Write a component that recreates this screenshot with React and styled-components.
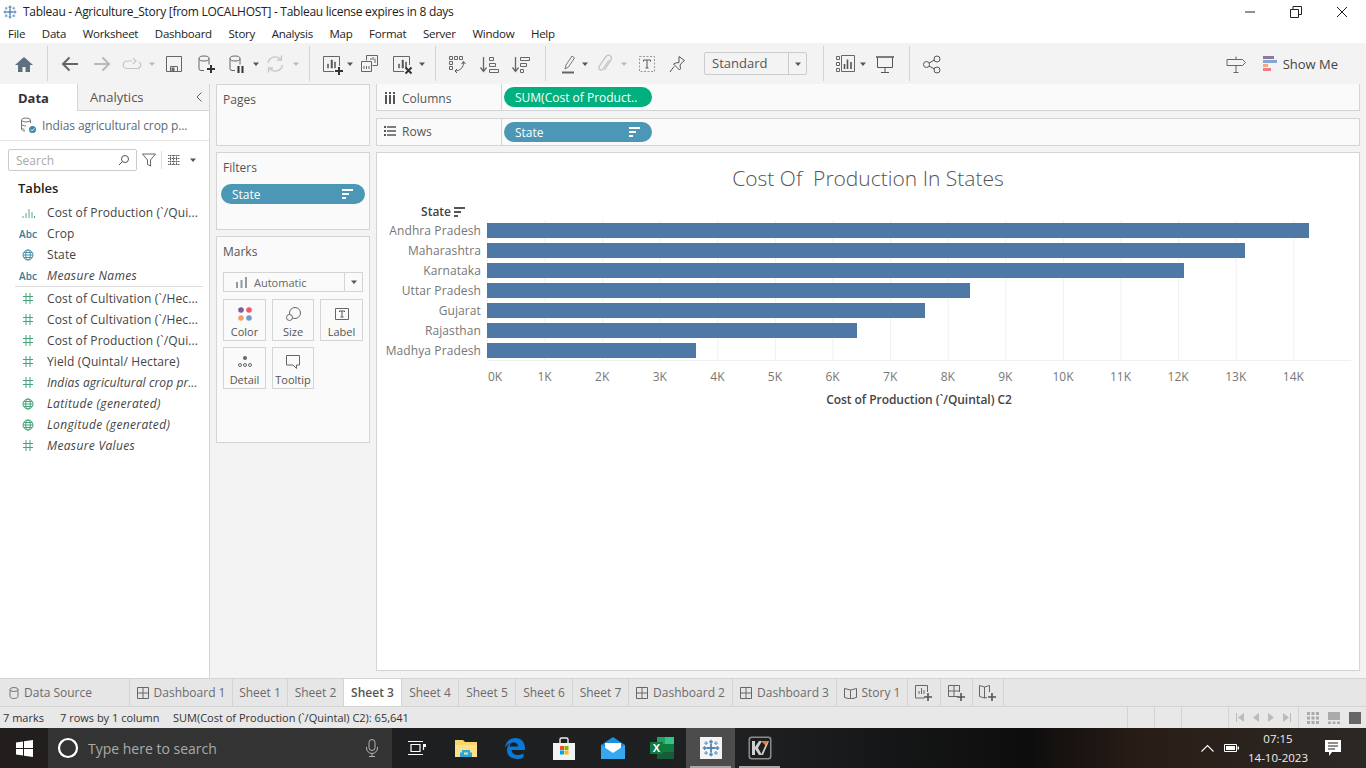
import React from 'react';
import styled, { createGlobalStyle } from 'styled-components';

const GlobalStyle = createGlobalStyle`
    html, body {
        margin: 0;
        padding: 0;
        background: #fff;
    }
    body {
        font-family: "Open Sans", "Liberation Sans", sans-serif;
        font-size: 12px;
        color: #333;
    }
    * {
        box-sizing: border-box;
    }
`;

const Icon = ({ children, w = 24, h = 24 }) => (
    <svg width={w} height={h} viewBox={`0 0 ${w} ${h}`} fill="none" style={{ display: 'block' }}>
        {children}
    </svg>
);

const TableauLogo = ({ size = 14 }) => (
    <svg width={size} height={size} viewBox="0 0 24 24" fill="none" style={{ display: 'block' }}>
        <g stroke="#4f86b5" strokeWidth="2">
            <path d="M12 6v12M6 12h12" strokeWidth="2.4" />
            <path d="M12 1v5M9.5 3.5h5M12 18v5M9.5 20.5h5M1 12h5M3.5 9.5v5M18 12h5M20.5 9.5v5" />
            <path d="M5.5 3v5M3 5.5h5M18.5 3v5M16 5.5h5M5.5 16v5M3 18.5h5M18.5 16v5M16 18.5h5" stroke="#7fa9cc" />
        </g>
    </svg>
);

const Caret = ({ light }) => (
    <Icon w={8} h={24}>
        <path d="M1 10.5h6L4 14z" fill={light ? '#bbb' : '#555'} />
    </Icon>
);

const Home = () => (
    <Icon>
        <path d="M12 5L3 13h3v7h4.5v-5h3v5H18v-7h3z" fill="#5f6f82" />
    </Icon>
);

const ArrowBack = () => (
    <Icon>
        <path d="M20 12H5M11.5 5.5L5 12l6.5 6.5" stroke="#666" strokeWidth="2" />
    </Icon>
);

const ArrowForward = () => (
    <Icon>
        <path d="M4 12h15M12.5 5.5L19 12l-6.5 6.5" stroke="#b8b8b8" strokeWidth="2" />
    </Icon>
);

const Redo = () => (
    <Icon>
        <path d="M12 9H7a3.5 3.5 0 0 0 0 7.5h10a3.5 3.5 0 0 0 2-6.5" stroke="#c6c6c6" strokeWidth="1.2" />
        <path d="M13 6l3 3-3 3" stroke="#c6c6c6" strokeWidth="1.2" />
    </Icon>
);

const Save = () => (
    <Icon>
        <path d="M4.5 4.5h15v15h-15z" stroke="#666" />
        <path d="M8.5 19.5v-5h7v5" stroke="#666" />
        <path d="M9.5 15.5h3v4h-3z" fill="#666" />
    </Icon>
);

const Cylinder = () => (
    <>
        <ellipse cx="11" cy="6.5" rx="5" ry="2.5" stroke="#666" />
        <path d="M6 6.5v10a2 2 0 0 0 2 2h3M16 6.5v6" stroke="#666" />
    </>
);

const DataAdd = () => (
    <Icon>
        <Cylinder />
        <path d="M18 13v8M14 17h8" stroke="#333" strokeWidth="2" />
    </Icon>
);

const DataPause = () => (
    <Icon>
        <Cylinder />
        <path d="M14.5 14v7M18.5 14v7" stroke="#333" strokeWidth="2" />
    </Icon>
);

const Refresh = () => (
    <Icon>
        <path d="M5 11a7.5 7.5 0 0 1 13-3.5M19.5 13A7.5 7.5 0 0 1 6.5 16.5" stroke="#c6c6c6" strokeWidth="1.3" />
        <path d="M18.5 3.5V8H14M5.5 20.5V16H10" stroke="#c6c6c6" strokeWidth="1.3" />
    </Icon>
);

const SheetBars = () => (
    <path d="M8.5 16v-4h1v4zM12 16V8h1.5v8zM15.5 16v-6h1v6z" fill="#555" stroke="#555" strokeWidth="0.5" />
);

const NewSheet = () => (
    <Icon>
        <path d="M20.5 14V4.5h-16v15H15" stroke="#666" />
        <SheetBars />
        <path d="M20 15v8M16 19h8" stroke="#333" strokeWidth="2" />
    </Icon>
);

const Duplicate = () => (
    <Icon>
        <path d="M7.5 8.5v-5h11v10h-5" stroke="#666" />
        <path d="M2.5 9.5h10v10h-10z" stroke="#666" fill="#f3f3f3" />
        <path d="M12 8V6M14 8V5M16 11V6.5M5 17v-3M7.5 17v-3M10 17v-3" stroke="#666" />
    </Icon>
);

const ClearSheet = () => (
    <Icon>
        <path d="M19.5 13V4.5h-16v15H14" stroke="#666" />
        <SheetBars />
        <path d="M15.5 15.5l6 6M21.5 15.5l-6 6" stroke="#333" strokeWidth="2" />
    </Icon>
);

const SwapAxes = () => (
    <Icon>
        <path d="M4.5 4.5h3v3h-3zM9.5 4.5h3v3h-3zM14.5 4.5h3v3h-3zM4.5 9.5h3v3h-3zM4.5 14.5h3v3h-3z" stroke="#666" />
        <path d="M18.5 10a8 8 0 0 1-8 9" stroke="#666" />
        <path d="M16.5 12l2-2.5 2 2.5M12 17l-2 2 2 2" stroke="#555" />
    </Icon>
);

const SortUp = () => (
    <Icon>
        <path d="M6.5 5v14M3.5 15.5l3 4 3-4" stroke="#666" strokeWidth="1.3" />
        <path d="M12.5 5.5h4v3h-4zM12.5 11.5h6v3h-6zM12.5 17.5h9v3h-9z" stroke="#666" />
    </Icon>
);

const SortDown = () => (
    <Icon>
        <path d="M6.5 5v14M3.5 15.5l3 4 3-4" stroke="#666" strokeWidth="1.3" />
        <path d="M11.5 5.5h9v3h-9zM11.5 11.5h6v3h-6zM11.5 17.5h3v3h-3z" stroke="#666" />
    </Icon>
);

const Highlight = () => (
    <Icon>
        <path d="M6 20.5h12" stroke="#666" strokeWidth="2" />
        <path d="M9 17l1-4 6-9 2.5 2-6 9z" stroke="#777" />
    </Icon>
);

const PaperClip = () => (
    <Icon>
        <path d="M16 8l-6 9a2.3 2.3 0 0 1-3.8-2.6L13 4.5a3 3 0 0 1 5 3.3l-6.5 10" stroke="#c4c4c4" strokeWidth="1.3" />
    </Icon>
);

const TextBox = () => (
    <Icon>
        <path d="M4.5 4.5h15v15h-15z" stroke="#999" strokeDasharray="2 1.5" />
        <path d="M8.5 9.5V8h7v1.5M12 8v8M10.5 16h3" stroke="#555" />
    </Icon>
);

const Pin = () => (
    <Icon>
        <path d="M14 4.5l5.5 4-1.5 1-3 3.5.5 3.5-1 1.5-6-6 2-1 3.5-.5z" stroke="#555" />
        <path d="M9 14.5L5 20" stroke="#555" />
    </Icon>
);

const ShowMeMini = () => (
    <Icon>
        <path d="M3.5 4.5h3v3h-3zM3.5 10.5h3v3h-3zM3.5 16.5h3v3h-3zM8.5 3.5h13v16h-13z" stroke="#666" />
        <path d="M11.5 17v-5M14.5 17V7.5M18 17v-7" stroke="#555" strokeWidth="1.6" />
    </Icon>
);

const Present = () => (
    <Icon>
        <path d="M3 5h18" stroke="#555" strokeWidth="1.5" />
        <path d="M4.5 5.5v10h15v-10M12 15.5v5M8 20.5h8" stroke="#555" />
    </Icon>
);

const Share = () => (
    <Icon>
        <circle cx="6.5" cy="12.5" r="3" stroke="#555" />
        <circle cx="17" cy="7" r="3" stroke="#555" />
        <circle cx="17" cy="18" r="3" stroke="#555" />
        <path d="M9 11l5.5-3M9 14l5.5 3" stroke="#555" />
    </Icon>
);

const Signpost = () => (
    <Icon>
        <path d="M3 7.5h15.5l3 3-3 3H3zM12 4.5v3M12 13.5v7M9.5 20.5h5" stroke="#666" />
    </Icon>
);

const ShowMeBars = () => (
    <Icon w={15} h={16}>
        <path d="M0 0h11v3H0z" fill="#8d79a3" />
        <path d="M0 4h14v3H0z" fill="#82a8d0" />
        <path d="M0 8h5v3H0z" fill="#f3a97a" />
        <path d="M0 12h8v3H0z" fill="#f27c85" />
    </Icon>
);

const PillSort = ({ color = '#fff' }) => (
    <Icon w={11} h={10}>
        <path d="M0 0h11v2H0zM0 4h7v2H0zM0 8h4v2H0z" fill={color} />
    </Icon>
);

const Globe = ({ color }) => (
    <Icon w={12} h={12}>
        <circle cx="6" cy="6" r="5" stroke={color} />
        <ellipse cx="6" cy="6" rx="2.3" ry="5" stroke={color} />
        <path d="M1 6h10M1.8 3.5h8.4M1.8 8.5h8.4" stroke={color} />
    </Icon>
);

const Hash = () => (
    <Icon w={10} h={11}>
        <path d="M3 0v11M7 0v11M0 3.5h10M0 7.5h10" stroke="#46a37c" />
    </Icon>
);

const MeasureBars = () => (
    <Icon w={13} h={10}>
        <path d="M1 8v2M4 5v5M7 1v9M10 4v6M12.5 8v2" stroke="#58a884" />
    </Icon>
);

const WindowsLogo = () => (
    <Icon w={17} h={17}>
        <path d="M0 2.5L7 1.5V8H0zM8 1.3L17 0v8H8zM0 9h7v6.5l-7-1zM8 9h9v8l-9-1.3z" fill="#fff" />
    </Icon>
);

const Mic = () => (
    <Icon w={14} h={18}>
        <rect x="4" y="0.5" width="6" height="11" rx="3" stroke="#b5b5b5" />
        <path d="M1.5 8v1a5.5 5.5 0 0 0 11 0V8M7 14.5v3M4 17.5h6" stroke="#b5b5b5" />
    </Icon>
);

const TaskView = () => (
    <Icon w={18} h={16}>
        <path d="M3 4.5h9v7H3zM0 1.5h15M0 14.5h15" stroke="#fff" strokeWidth="1.2" />
        <path d="M15.5 5v5" stroke="#fff" strokeWidth="1.2" />
        <path d="M15 4h3v3h-3z" fill="#fff" />
    </Icon>
);

const FolderIcon = () => (
    <Icon w={22} h={18}>
        <path d="M0 1h8l2 2h12v15H0z" fill="#f8d568" />
        <path d="M0 6h22v12H0z" fill="#fde08a" />
        <path d="M7 11h8v2.5h2V18H5v-4.5h2z" fill="#2aa6e0" />
        <path d="M9 13.5h4v2H9z" fill="#fde08a" />
    </Icon>
);

const EdgeLogo = () => (
    <svg width="22" height="22" viewBox="0 0 22 22" style={{ display: 'block' }}>
        <path
            d="M1 10.5C2 4 6.5 1 11.5 1c6 0 9.5 4.5 9.5 10.5V13H7.5c.3 3.500 3 5 6 5 2.500 0 4.500-.7 6-1.800v4.300c-1.800 1-4 1.500-6.500 1.500-6 0-10-3.500-10-9 0-3.500 2-6.500 5-8-1.500 1.500-2.300 3-2.500 4.500h8.500c0-2.500-1.500-4-4.500-4-3.500 0-6.500 2-8.500 5z"
            fill="#0a78d7"
        />
    </svg>
);

const StoreLogo = () => (
    <Icon w={24} h={24}>
        <path d="M8 7V3.5A1.5 1.5 0 0 1 9.5 2h5A1.5 1.5 0 0 1 16 3.5V7" stroke="#eee" strokeWidth="1.4" />
        <path d="M1 7h22v17H1z" fill="#f2f2f2" />
        <path d="M8 10h4v4H8z" fill="#f25022" />
        <path d="M12.5 10h4v4h-4z" fill="#7fba00" />
        <path d="M8 14.5h4v4H8z" fill="#00a4ef" />
        <path d="M12.5 14.5h4v4h-4z" fill="#ffb900" />
    </Icon>
);

const MailLogo = () => (
    <Icon w={24} h={22}>
        <path d="M0 8L12 0l12 8v14H0z" fill="#1d8fe3" />
        <path d="M4 6h16v6l-8 5-8-5z" fill="#fff" />
        <path d="M0 8l12 8 12-8v14H0z" fill="#35a8f0" />
    </Icon>
);

const ExcelLogo = () => (
    <svg width="24" height="24" viewBox="0 0 24 24" style={{ display: 'block' }}>
        <path d="M7 1h17v7H7z" fill="#21a366" />
        <path d="M7 8h17v8H7z" fill="#107c41" />
        <path d="M15 1h9v7h-9z" fill="#33c481" />
        <path d="M7 16h17v7H7z" fill="#185c37" />
        <path d="M0 6h13v12H0z" fill="#0f7b3f" />
        <text x="6.5" y="16" fontFamily="Liberation Sans, sans-serif" fontSize="11" fontWeight="700" fill="#fff" textAnchor="middle">X</text>
    </svg>
);

const K7Logo = () => (
    <Icon w={24} h={24}>
        <rect x="0.5" y="0.5" width="23" height="23" rx="3" fill="#8b8b8b" />
        <rect x="2" y="2" width="20" height="20" rx="2" fill="#1f1f1f" />
        <path d="M4 5h3v6l4-6h3l-4 7 4 7h-3l-4-6v6H4z" fill="#cfcfcf" />
        <path d="M13 5h8l-3 5z" fill="#ef7a2d" />
        <path d="M21 5l-6 14h-2l4.5-10z" fill="#cfcfcf" />
    </Icon>
);

const SearchRing = () => (
    <Icon w={22} h={22}>
        <circle cx="11" cy="11" r="9" stroke="#fff" strokeWidth="2.2" />
    </Icon>
);

const TrayChevron = () => (
    <Icon w={13} h={8}>
        <path d="M.5 7.5l6-6 6 6" stroke="#fff" strokeWidth="1.1" />
    </Icon>
);

const TrayBattery = () => (
    <Icon w={15} h={10}>
        <path d="M.5 1.5h12v7H.5z" stroke="#fff" />
        <path d="M2 3h9v4H2z" fill="#fff" />
        <path d="M13.5 3.5H15v3h-1.5z" fill="#fff" />
    </Icon>
);

const TrayNotes = () => (
    <Icon w={17} h={17}>
        <path d="M0 0h16v12H7l-3 4v-4H0z" fill="#fff" />
        <path d="M3 3h10M3 6h10M3 9h7" stroke="#222" />
    </Icon>
);

const DashIcon = () => (
    <Icon w={12} h={12}>
        <path d="M.5.5h11v11H.5zM6 .5v11M.5 6h11" stroke="#666" />
    </Icon>
);

const StoryIcon = () => (
    <Icon w={13} h={12}>
        <path d="M.5 1.5l6 1.5 6-1.5v9l-6 1.5-6-1.5zM6.5 3v9" stroke="#666" />
    </Icon>
);

const AddSheet = ({ children }) => (
    <Icon w={18} h={18}>
        {children}
        <path d="M13 9v8M9 13h8" stroke="#555" strokeWidth="1.6" />
    </Icon>
);

const fields = [
    { name: 'Cost of Production (`/Qui...', kind: 'bars' },
    { name: 'Crop', kind: 'abc' },
    { name: 'State', kind: 'globeBlue' },
    { name: 'Measure Names', kind: 'abc', italic: true },
];

const measures = [
    { name: 'Cost of Cultivation (`/Hec...', kind: 'hash' },
    { name: 'Cost of Cultivation (`/Hec...', kind: 'hash' },
    { name: 'Cost of Production (`/Qui...', kind: 'hash' },
    { name: 'Yield (Quintal/ Hectare)', kind: 'hash' },
    { name: 'Indias agricultural crop pr...', kind: 'hash', italic: true, tight: true },
    { name: 'Latitude (generated)', kind: 'globeGreen', italic: true },
    { name: 'Longitude (generated)', kind: 'globeGreen', italic: true },
    { name: 'Measure Values', kind: 'hash', italic: true },
];

const states = [
    { name: 'Andhra Pradesh', width: 822 },
    { name: 'Maharashtra', width: 758 },
    { name: 'Karnataka', width: 697 },
    { name: 'Uttar Pradesh', width: 483 },
    { name: 'Gujarat', width: 438 },
    { name: 'Rajasthan', width: 370 },
    { name: 'Madhya Pradesh', width: 209 },
];

const tabs = [
    { label: 'Dashboard 1', width: 103, kind: 'dash' },
    { label: 'Sheet 1', width: 55 },
    { label: 'Sheet 2', width: 56 },
    { label: 'Sheet 3', width: 58, active: true },
    { label: 'Sheet 4', width: 57 },
    { label: 'Sheet 5', width: 57 },
    { label: 'Sheet 6', width: 57 },
    { label: 'Sheet 7', width: 56 },
    { label: 'Dashboard 2', width: 104, kind: 'dash' },
    { label: 'Dashboard 3', width: 104, kind: 'dash' },
    { label: 'Story 1', width: 71, kind: 'story' },
];

const menu = ['File', 'Data', 'Worksheet', 'Dashboard', 'Story', 'Analysis', 'Map', 'Format', 'Server', 'Window', 'Help'];

const Field = ({ field }) => (
    <FieldRow>
        <FieldIcon>
            {field.kind === 'bars' && <MeasureBars />}
            {field.kind === 'abc' && <Abc>Abc</Abc>}
            {field.kind === 'hash' && <Hash />}
            {field.kind === 'globeBlue' && <Globe color="#4b8fa8" />}
            {field.kind === 'globeGreen' && <Globe color="#46a37c" />}
        </FieldIcon>
        <FieldName $italic={field.italic} $tight={field.tight}>{field.name}</FieldName>
    </FieldRow>
);

const App = () => {
    return (
        <>
            <GlobalStyle />
            <Screen>
                <TitleBar>
                    <TableauLogo />
                    <TitleText>Tableau - Agriculture_Story [from LOCALHOST] - Tableau license expires in 8 days</TitleText>
                    <WindowControls>
                        <Icon w={12} h={12}><path d="M1 6h10" stroke="#222" /></Icon>
                        <Icon w={12} h={12}><path d="M.5 3.5h8v8h-8zM3 3.5V.5h8.5v8H8.5" stroke="#222" /></Icon>
                        <Icon w={12} h={12}><path d="M1 1l10 10M11 1L1 11" stroke="#222" /></Icon>
                    </WindowControls>
                </TitleBar>
                <MenuBar>
                    {menu.map((item) => (
                        <MenuItem key={item}>{item}</MenuItem>
                    ))}
                </MenuBar>
                <Toolbar>
                    <Tool $ml={12}><Home /></Tool>
                    <ToolSep $ml={11} />
                    <Tool $ml={10}><ArrowBack /></Tool>
                    <Tool $ml={8}><ArrowForward /></Tool>
                    <Tool $ml={6}><Redo /></Tool>
                    <Tool $ml={4} $w={8}><Caret light /></Tool>
                    <Tool $ml={6}><Save /></Tool>
                    <Tool $ml={7}><DataAdd /></Tool>
                    <Tool $ml={7}><DataPause /></Tool>
                    <Tool $ml={4} $w={8}><Caret /></Tool>
                    <Tool $ml={3}><Refresh /></Tool>
                    <Tool $ml={5} $w={8}><Caret light /></Tool>
                    <ToolSep $ml={9} />
                    <Tool $ml={9}><NewSheet /></Tool>
                    <Tool $ml={3} $w={8}><Caret /></Tool>
                    <Tool $ml={5}><Duplicate /></Tool>
                    <Tool $ml={7}><ClearSheet /></Tool>
                    <Tool $ml={4} $w={8}><Caret /></Tool>
                    <ToolSep $ml={9} />
                    <Tool $ml={9}><SwapAxes /></Tool>
                    <Tool $ml={8}><SortUp /></Tool>
                    <Tool $ml={8}><SortDown /></Tool>
                    <ToolSep $ml={12} />
                    <Tool $ml={10}><Highlight /></Tool>
                    <Tool $ml={1} $w={8}><Caret /></Tool>
                    <Tool $ml={4}><PaperClip /></Tool>
                    <Tool $ml={3} $w={8}><Caret light /></Tool>
                    <Tool $ml={7}><TextBox /></Tool>
                    <Tool $ml={6}><Pin /></Tool>
                    <FitSelect>
                        <FitLabel>Standard</FitLabel>
                        <FitArrow><Caret /></FitArrow>
                    </FitSelect>
                    <ToolSep $ml={16} />
                    <Tool $ml={9}><ShowMeMini /></Tool>
                    <Tool $ml={2} $w={8}><Caret /></Tool>
                    <Tool $ml={6}><Present /></Tool>
                    <ToolSep $ml={12} />
                    <Tool $ml={10}><Share /></Tool>
                    <ToolSpacer />
                    <Tool><Signpost /></Tool>
                    <Tool $ml={15} $w={15}><ShowMeBars /></Tool>
                    <ShowMeText>Show Me</ShowMeText>
                </Toolbar>
                <Workspace>
                    <DataPane>
                        <PaneTabs>
                            <PaneTab $active>Data</PaneTab>
                            <PaneTab>
                                Analytics
                                <Icon w={8} h={12}><path d="M6.5 1.5L2 6l4.5 4.5" stroke="#666" /></Icon>
                            </PaneTab>
                        </PaneTabs>
                        <SourceRow>
                            <Icon w={17} h={17}>
                                <ellipse cx="6" cy="3" rx="4.5" ry="2" stroke="#777" />
                                <path d="M1.5 3v9c0 1 1.5 2 3.5 2M10.5 3v3M1.5 7c0 1 2 2 4.5 2M1.5 10.5c0 1 1.5 1.5 3 1.8" stroke="#777" />
                                <circle cx="12.5" cy="12.5" r="3.5" fill="#3d88ad" />
                                <path d="M10.8 12.5l1.3 1.3 2.2-2.3" stroke="#fff" />
                            </Icon>
                            <SourceName>Indias agricultural crop p...</SourceName>
                        </SourceRow>
                        <SearchRow>
                            <SearchBox>
                                <SearchHint>Search</SearchHint>
                                <Icon w={12} h={12}><circle cx="7" cy="5" r="3.5" stroke="#555" /><path d="M4.5 7.5L1 11" stroke="#555" /></Icon>
                            </SearchBox>
                            <FilterButton>
                                <Icon w={14} h={14}><path d="M.5 1h13l-5 6v6l-3-1.5V7z" stroke="#666" /></Icon>
                            </FilterButton>
                            <SearchDivider />
                            <Icon w={12} h={10}><path d="M0 .5h12M0 3.5h12M0 6.5h12M0 9.5h12M2.5 0v10M5.5 0v10M8.5 0v10" stroke="#666" strokeDasharray="1.5 .5" /></Icon>
                            <ListCaret><Caret /></ListCaret>
                        </SearchRow>
                        <TablesTitle>Tables</TablesTitle>
                        <FieldGroup>
                            {fields.map((field) => (
                                <Field key={field.name} field={field} />
                            ))}
                        </FieldGroup>
                        <FieldDivider />
                        <FieldGroup>
                            {measures.map((field, index) => (
                                <Field key={index} field={field} />
                            ))}
                        </FieldGroup>
                    </DataPane>
                    <CardsColumn>
                        <Card $h={62}>
                            <CardTitle>Pages</CardTitle>
                        </Card>
                        <Card $h={78} $mt={6}>
                            <CardTitle>Filters</CardTitle>
                            <FilterPill>
                                State
                                <PillSort />
                            </FilterPill>
                        </Card>
                        <Card $h={207} $mt={6}>
                            <CardTitle>Marks</CardTitle>
                            <MarkSelect>
                                <Icon w={13} h={11}><path d="M1 5v6M5.5 3v8M10 0v11" stroke="#999" strokeWidth="2" /></Icon>
                                <MarkSelectLabel>Automatic</MarkSelectLabel>
                                <MarkSelectArrow><Caret /></MarkSelectArrow>
                            </MarkSelect>
                            <MarkGrid>
                                <MarkButton>
                                    <Icon w={14} h={14}>
                                        <circle cx="3" cy="3" r="2.8" fill="#7b5f9a" />
                                        <circle cx="11" cy="3" r="2.8" fill="#ef5b6c" />
                                        <circle cx="3" cy="11" r="2.8" fill="#f0a06c" />
                                        <circle cx="11" cy="11" r="2.8" fill="#6f9ccc" />
                                    </Icon>
                                    Color
                                </MarkButton>
                                <MarkButton>
                                    <Icon w={15} h={14}>
                                        <circle cx="9" cy="6" r="5.5" stroke="#666" fill="#fafafa" />
                                        <circle cx="3.5" cy="10.5" r="3" stroke="#666" fill="#fafafa" />
                                    </Icon>
                                    Size
                                </MarkButton>
                                <MarkButton>
                                    <Icon w={14} h={14}>
                                        <path d="M.5 1.5h13v11H.5z" stroke="#666" />
                                        <path d="M4.5 5V4h5v1M7 4v6M5.5 10h3" stroke="#555" />
                                    </Icon>
                                    Label
                                </MarkButton>
                                <MarkButton>
                                    <Icon w={14} h={14}>
                                        <circle cx="7" cy="3" r="2" fill="#666" />
                                        <circle cx="2" cy="10" r="1.5" stroke="#666" />
                                        <circle cx="7" cy="10" r="1.5" stroke="#666" />
                                        <circle cx="12" cy="10" r="1.5" stroke="#666" />
                                    </Icon>
                                    Detail
                                </MarkButton>
                                <MarkButton>
                                    <Icon w={14} h={14}>
                                        <path d="M.5 .5h13V10h-3v3.5L7 10H.5z" stroke="#666" />
                                    </Icon>
                                    Tooltip
                                </MarkButton>
                            </MarkGrid>
                        </Card>
                    </CardsColumn>
                    <ViewColumn>
                        <Shelf>
                            <ShelfLabel $top={2}>
                                <Icon w={12} h={12}><path d="M2 3v9M6 3v9M10 3v9" stroke="#555" strokeWidth="2" /><path d="M1 0h2v2H1zM5 0h2v2H5zM9 0h2v2H9z" fill="#555" /></Icon>
                                Columns
                            </ShelfLabel>
                            <Pill $color="#00b17f">SUM(Cost of Product..</Pill>
                        </Shelf>
                        <Shelf $mt={7}>
                            <ShelfLabel $bottom={2}>
                                <Icon w={12} h={12}><path d="M3 2h9M3 6h9M3 10h9" stroke="#555" strokeWidth="1.5" /><path d="M0 1h2v2H0zM0 5h2v2H0zM0 9h2v2H0z" fill="#555" /></Icon>
                                Rows
                            </ShelfLabel>
                            <Pill $color="#4b97b5">
                                State
                                <PillSort />
                            </Pill>
                        </Shelf>
                        <ChartCard>
                            <ChartTitle>Cost Of&nbsp; Production In States</ChartTitle>
                            <ChartHeader>
                                <StateHeader>
                                    State
                                    <PillSort color="#555" />
                                </StateHeader>
                            </ChartHeader>
                            <ChartBody>
                                <LabelColumn>
                                    {states.map((state) => (
                                        <StateLabel key={state.name}>{state.name}</StateLabel>
                                    ))}
                                </LabelColumn>
                                <Plot>
                                    {states.map((state) => (
                                        <BarRow key={state.name}>
                                            <Bar style={{ width: state.width }} />
                                        </BarRow>
                                    ))}
                                </Plot>
                            </ChartBody>
                            <Axis>
                                <AxisTick $first>0K</AxisTick>
                                {[1, 2, 3, 4, 5, 6, 7, 8, 9, 10, 11, 12, 13, 14].map((k) => (
                                    <AxisTick key={k}>{k}K</AxisTick>
                                ))}
                            </Axis>
                            <AxisTitle>Cost of Production (`/Quintal) C2</AxisTitle>
                        </ChartCard>
                    </ViewColumn>
                </Workspace>
                <TabBar>
                    <Tab $w={130} $source>
                        <Icon w={10} h={12}><ellipse cx="5" cy="2.5" rx="4" ry="2" stroke="#777" /><path d="M1 2.5v7c0 1 1.5 2 4 2s4-1 4-2v-7" stroke="#777" /></Icon>
                        Data Source
                    </Tab>
                    {tabs.map((tab) => (
                        <Tab key={tab.label} $w={tab.width} $active={tab.active}>
                            {tab.kind === 'dash' && <DashIcon />}
                            {tab.kind === 'story' && <StoryIcon />}
                            {tab.label}
                        </Tab>
                    ))}
                    <Tab $w={33}>
                        <AddSheet><path d="M9.5 14H.5V1.5h12V8" stroke="#666" /><path d="M4 10V7M6.5 10V4M9 10V6" stroke="#666" /></AddSheet>
                    </Tab>
                    <Tab $w={32}>
                        <AddSheet><path d="M9.5 12.5H.5v-11h11V8M6 1.5v11M.5 7h11" stroke="#666" /></AddSheet>
                    </Tab>
                    <Tab $w={31}>
                        <AddSheet><path d="M8 13.5l-2.5.5-5-1.5V1.5l5 1.5 5-1.500V8M5.5 3v11" stroke="#666" /></AddSheet>
                    </Tab>
                </TabBar>
                <StatusBar>
                    <StatusText $w={57}>7 marks</StatusText>
                    <StatusText $w={113}>7 rows by 1 column</StatusText>
                    <StatusText>SUM(Cost of Production (`/Quintal) C2): 65,641</StatusText>
                    <StatusSpacer />
                    <StatusCell $w={27} />
                    <StatusCell $w={27} />
                    <StatusCell $w={47} />
                    <StatusCell $w={70}>
                        <Icon w={8} h={9}><path d="M0 0h1v9H0zM8 0v9L2 4.5z" fill="#bbb" /></Icon>
                        <Icon w={6} h={9}><path d="M6 0v9L0 4.5z" fill="#bbb" /></Icon>
                        <Icon w={6} h={9}><path d="M0 0v9l6-4.5z" fill="#bbb" /></Icon>
                        <Icon w={8} h={9}><path d="M7 0h1v9H7zM0 0v9l6-4.5z" fill="#bbb" /></Icon>
                    </StatusCell>
                    <ViewModes>
                        <Icon w={12} h={12}><path d="M0 0h3v3H0zM4.5 0h3v3h-3zM9 0h3v3H9zM0 4.5h3v3H0zM4.5 4.5h3v3h-3zM9 4.5h3v3H9zM0 9h3v3H0zM4.5 9h3v3h-3zM9 9h3v3H9z" fill="#aaa" /></Icon>
                        <Icon w={12} h={12}><path d="M0 0h12v8H0zM0 9.5h3V12H0zM4.5 9.5h3V12h-3zM9 9.5h3V12H9z" fill="#aaa" /></Icon>
                        <Icon w={12} h={12}><path d="M0 0h12v12H0z" fill="#666" /></Icon>
                    </ViewModes>
                </StatusBar>
                <Taskbar>
                    <StartButton><WindowsLogo /></StartButton>
                    <SearchField>
                        <SearchRing />
                        <SearchPrompt>Type here to search</SearchPrompt>
                        <Mic />
                    </SearchField>
                    <TaskItem><TaskView /></TaskItem>
                    <TaskItem><FolderIcon /></TaskItem>
                    <TaskItem><EdgeLogo /></TaskItem>
                    <TaskItem><StoreLogo /></TaskItem>
                    <TaskItem><MailLogo /></TaskItem>
                    <TaskItem><ExcelLogo /></TaskItem>
                    <TaskItem $active $open>
                        <TableauTile><TableauLogo size={18} /></TableauTile>
                    </TaskItem>
                    <TaskItem $open><K7Logo /></TaskItem>
                    <TrayArea>
                        <TrayChevron />
                        <TrayGap />
                        <TrayBattery />
                        <Clock>
                            <span>07:15</span>
                            <span>14-10-2023</span>
                        </Clock>
                        <TrayNotes />
                    </TrayArea>
                </Taskbar>
            </Screen>
        </>
    );
};

export default App;

const Screen = styled.div`
    width: 1366px;
    height: 768px;
    display: flex;
    flex-direction: column;
    overflow: hidden;
    background: #fff;
`;

const TitleBar = styled.div`
    height: 23px;
    flex: none;
    display: flex;
    align-items: center;
    padding-left: 3px;
    color: #222;
`;

const TitleText = styled.span`
    margin-left: 6px;
    font-size: 12px;
    white-space: nowrap;
    letter-spacing: -0.27px;
`;

const WindowControls = styled.div`
    margin-left: auto;
    display: flex;
    align-items: center;
    gap: 34px;
    padding-right: 18px;
`;

const MenuBar = styled.div`
    height: 20px;
    flex: none;
    display: flex;
    align-items: center;
    padding-left: 8px;
    gap: 16.6px;
`;

const MenuItem = styled.span`
    font-size: 11.5px;
    color: #222;
    letter-spacing: -0.25px;
`;

const Toolbar = styled.div`
    height: 41px;
    flex: none;
    display: flex;
    align-items: center;
    background: #f3f3f3;
`;

const Tool = styled.div`
    width: ${(p) => p.$w || 24}px;
    height: 24px;
    flex: none;
    margin-left: ${(p) => p.$ml || 0}px;
    display: flex;
    align-items: center;
    justify-content: center;
`;

const ToolSep = styled.div`
    width: 1px;
    height: 35px;
    flex: none;
    margin-left: ${(p) => p.$ml}px;
    background: #d4d4d4;
`;

const ToolSpacer = styled.div`
    flex: 1;
`;

const FitSelect = styled.div`
    width: 103px;
    height: 23px;
    flex: none;
    margin-left: 15px;
    display: flex;
    border: 1px solid #ccc;
    border-radius: 2px;
`;

const FitLabel = styled.div`
    flex: 1;
    padding-left: 7px;
    font-size: 13px;
    line-height: 20px;
    color: #555;
`;

const FitArrow = styled.div`
    width: 18px;
    display: flex;
    justify-content: center;
    align-items: center;
    border-left: 1px solid #ccc;
`;

const ShowMeText = styled.span`
    margin-left: 5px;
    padding-right: 28px;
    font-size: 13px;
    color: #444;
`;

const Workspace = styled.div`
    height: 594px;
    flex: none;
    display: flex;
    background: #f3f3f3;
`;

const DataPane = styled.div`
    width: 210px;
    flex: none;
    background: #fff;
    border-right: 1px solid #d4d4d4;
    display: flex;
    flex-direction: column;
`;

const PaneTabs = styled.div`
    height: 27px;
    flex: none;
    display: flex;
`;

const PaneTab = styled.div`
    flex: ${(p) => (p.$active ? 'none' : 1)};
    width: ${(p) => (p.$active ? '77px' : 'auto')};
    display: flex;
    align-items: center;
    justify-content: ${(p) => (p.$active ? 'flex-start' : 'space-between')};
    padding: ${(p) => (p.$active ? '0 0 0 18px' : '0 6px 0 12px')};
    font-size: 13px;
    font-weight: ${(p) => (p.$active ? 700 : 400)};
    color: ${(p) => (p.$active ? '#333' : '#555')};
    background: ${(p) => (p.$active ? '#fff' : '#f3f3f3')};
    border-left: ${(p) => (p.$active ? 'none' : '1px solid #d4d4d4')};
    border-bottom: ${(p) => (p.$active ? 'none' : '1px solid #d4d4d4')};
`;

const SourceRow = styled.div`
    height: 30px;
    flex: none;
    display: flex;
    align-items: center;
    gap: 5px;
    padding-left: 20px;
    border-bottom: 1px solid #e4e4e4;
`;

const SourceName = styled.span`
    font-size: 12px;
    letter-spacing: -0.1px;
    color: #5d6b75;
`;

const SearchRow = styled.div`
    height: 22px;
    margin-top: 8px;
    flex: none;
    display: flex;
    align-items: center;
    padding-left: 8px;
`;

const SearchBox = styled.div`
    width: 129px;
    height: 22px;
    display: flex;
    align-items: center;
    justify-content: space-between;
    padding: 0 6px 0 7px;
    border: 1px solid #ccc;
    border-radius: 2px;
`;

const SearchHint = styled.span`
    font-size: 12px;
    color: #aaa;
`;

const FilterButton = styled.div`
    margin-left: 5px;
`;

const SearchDivider = styled.div`
    width: 1px;
    height: 18px;
    margin: 0 6px 0 5px;
    background: #ddd;
`;

const ListCaret = styled.div`
    margin-left: 9px;
`;

const TablesTitle = styled.div`
    margin-top: 8px;
    margin-bottom: 5px;
    padding-left: 18px;
    font-size: 13px;
    line-height: 18px;
    font-weight: 600;
    color: #222;
`;

const FieldGroup = styled.div`
    display: flex;
    flex-direction: column;
`;

const FieldRow = styled.div`
    height: 21px;
    display: flex;
    align-items: center;
`;

const FieldIcon = styled.div`
    width: 47px;
    flex: none;
    display: flex;
    justify-content: center;
    padding-left: 9px;
`;

const Abc = styled.span`
    font-size: 10px;
    font-weight: 600;
    color: #3b7a96;
`;

const FieldName = styled.span`
    font-size: 12px;
    color: #444;
    white-space: nowrap;
    letter-spacing: ${(p) => (p.$tight ? '0.1px' : p.$italic ? '0.35px' : '0.13px')};
    font-style: ${(p) => (p.$italic ? 'italic' : 'normal')};
`;

const FieldDivider = styled.div`
    height: 1px;
    margin: 0 6px 1px 15px;
    flex: none;
    background: #ddd;
`;

const CardsColumn = styled.div`
    width: 154px;
    flex: none;
    margin-left: 6px;
    display: flex;
    flex-direction: column;
`;

const Card = styled.div`
    height: ${(p) => p.$h}px;
    flex: none;
    margin-top: ${(p) => p.$mt || 0}px;
    padding: 7px 6px 0;
    background: #fafafa;
    border: 1px solid #d4d4d4;
`;

const CardTitle = styled.div`
    font-size: 12px;
    line-height: 16px;
    color: #555;
`;

const Pill = styled.div`
    width: 148px;
    height: 20px;
    margin-left: 2px;
    padding: 0 12px 0 11px;
    display: flex;
    align-items: center;
    justify-content: space-between;
    font-size: 12px;
    color: #fff;
    white-space: nowrap;
    border-radius: 10px;
    background: ${(p) => p.$color};
`;

const FilterPill = styled(Pill)`
    width: 144px;
    margin: 8px 0 0 -2px;
    background: #4b97b5;
`;

const MarkSelect = styled.div`
    height: 20px;
    margin-top: 12px;
    display: flex;
    align-items: center;
    padding-left: 12px;
    border: 1px solid #d4d4d4;
`;

const MarkSelectLabel = styled.span`
    margin-left: 5px;
    font-size: 11px;
    color: #666;
`;

const MarkSelectArrow = styled.div`
    margin-left: auto;
    width: 18px;
    height: 100%;
    display: flex;
    align-items: center;
    justify-content: center;
    border-left: 1px solid #d4d4d4;
`;

const MarkGrid = styled.div`
    margin-top: 7px;
    display: grid;
    grid-template-columns: 43px 42px 43px;
    grid-auto-rows: 42px;
    column-gap: 6px;
    row-gap: 6px;
`;

const MarkButton = styled.div`
    display: flex;
    flex-direction: column;
    align-items: center;
    justify-content: flex-end;
    gap: 3px;
    padding-bottom: 1px;
    font-size: 11px;
    color: #555;
    border: 1px solid #d4d4d4;
`;

const ViewColumn = styled.div`
    flex: none;
    width: 984px;
    margin-left: 6px;
    display: flex;
    flex-direction: column;
`;

const Shelf = styled.div`
    height: ${(p) => (p.$mt ? 28 : 27)}px;
    flex: none;
    margin-top: ${(p) => p.$mt || 0}px;
    display: flex;
    align-items: center;
    background: #fafafa;
    border: 1px solid #d4d4d4;
    border-top: ${(p) => (p.$mt ? '1px solid #d4d4d4' : 'none')};
`;

const ShelfLabel = styled.div`
    width: 125px;
    height: 100%;
    flex: none;
    display: flex;
    align-items: center;
    gap: 6px;
    padding: ${(p) => p.$top || 0}px 0 ${(p) => p.$bottom || 0}px 7px;
    font-size: 12px;
    color: #555;
    border-right: 1px solid #d4d4d4;
`;

const ChartCard = styled.div`
    height: 519px;
    flex: none;
    margin-top: 6px;
    background: #fff;
    border: 1px solid #d4d4d4;
`;

const ChartTitle = styled.div`
    height: 50px;
    padding-top: 10px;
    text-align: center;
    font-size: 21px;
    line-height: 30px;
    font-weight: 300;
    color: #555;
`;

const ChartHeader = styled.div`
    height: 17px;
    width: 110px;
    display: flex;
    justify-content: flex-end;
`;

const StateHeader = styled.div`
    display: flex;
    align-items: center;
    gap: 3px;
    padding-right: 22px;
    font-size: 12px;
    font-weight: 600;
    color: #444;
`;

const ChartBody = styled.div`
    display: flex;
`;

const LabelColumn = styled.div`
    width: 110px;
    flex: none;
    display: flex;
    flex-direction: column;
    padding-right: 6px;
`;

const StateLabel = styled.div`
    height: 20px;
    text-align: right;
    font-size: 12px;
    line-height: 22px;
    letter-spacing: 0.1px;
    color: #777;
    white-space: nowrap;
`;

const Plot = styled.div`
    width: 864px;
    height: 141px;
    border-bottom: 1px solid #f0f0f0;
    background-image: linear-gradient(to right, #f0f0f0 1px, transparent 1px);
    background-size: 57.6px 100%;
`;

const BarRow = styled.div`
    height: 20px;
    display: flex;
    align-items: center;
`;

const Bar = styled.div`
    height: 15px;
    background: #4e79a7;
`;

const Axis = styled.div`
    height: 30px;
    margin-left: 110px;
    display: flex;
    align-items: center;
`;

const AxisTick = styled.div`
    width: ${(p) => (p.$first ? '28.8px' : '57.6px')};
    flex: none;
    padding-left: ${(p) => (p.$first ? '1px' : 0)};
    text-align: ${(p) => (p.$first ? 'left' : 'center')};
    font-size: 12px;
    color: #777;
`;

const AxisTitle = styled.div`
    width: 864px;
    margin-left: 110px;
    text-align: center;
    font-size: 12px;
    font-weight: 600;
    letter-spacing: -0.05px;
    color: #444;
`;

const TabBar = styled.div`
    height: 29px;
    flex: none;
    display: flex;
    background: #e6e6e6;
    border-top: 1px solid #d4d4d4;
    border-bottom: 1px solid #d4d4d4;
`;

const Tab = styled.div`
    width: ${(p) => p.$w}px;
    flex: none;
    display: flex;
    align-items: center;
    justify-content: ${(p) => (p.$source ? 'flex-start' : 'center')};
    gap: 5px;
    padding-left: ${(p) => (p.$source ? '9px' : 0)};
    font-size: 12px;
    white-space: nowrap;
    font-weight: ${(p) => (p.$active ? 600 : 400)};
    color: ${(p) => (p.$active ? '#555' : '#6b6b6b')};
    background: ${(p) => (p.$active ? '#fff' : 'transparent')};
    border-right: 1px solid #d4d4d4;
`;

const StatusBar = styled.div`
    height: 21px;
    flex: none;
    display: flex;
    align-items: center;
    padding-left: 3px;
    background: #e8e8e8;
`;

const StatusText = styled.span`
    width: ${(p) => (p.$w ? `${p.$w}px` : 'auto')};
    flex: none;
    font-size: 11px;
    color: #333;
    white-space: nowrap;
`;

const StatusSpacer = styled.div`
    flex: 1;
`;

const StatusCell = styled.div`
    width: ${(p) => p.$w}px;
    height: 100%;
    flex: none;
    display: flex;
    align-items: center;
    justify-content: center;
    gap: 9px;
    border-left: 1px solid #d4d4d4;
`;

const ViewModes = styled.div`
    width: 68px;
    height: 100%;
    flex: none;
    display: flex;
    align-items: center;
    justify-content: center;
    gap: 9px;
    padding-left: 2px;
    border-left: 1px solid #d4d4d4;
`;

const Taskbar = styled.div`
    height: 40px;
    flex: none;
    display: flex;
    align-items: stretch;
    background: linear-gradient(to right, #1e1e1e 0%, #1e2022 55%, #0d0d0d 75%, #2a1d17 84%, #2b2824 100%);
`;

const StartButton = styled.div`
    width: 48px;
    flex: none;
    display: flex;
    align-items: center;
    justify-content: center;
    background: #211e1d;
`;

const SearchField = styled.div`
    width: 344px;
    flex: none;
    display: flex;
    align-items: center;
    padding: 0 13px 0 9px;
    background: #333;
`;

const SearchPrompt = styled.span`
    flex: 1;
    margin-left: 9px;
    font-size: 14px;
    color: #aaa;
`;

const TaskItem = styled.div`
    position: relative;
    width: 49px;
    flex: none;
    display: flex;
    align-items: center;
    justify-content: center;
    background: ${(p) => (p.$active ? '#4c4c4c' : 'transparent')};
    &::after {
        content: '';
        display: ${(p) => (p.$open ? 'block' : 'none')};
        position: absolute;
        left: 4px;
        right: 4px;
        bottom: 0;
        height: 2px;
        background: #a8a8a8;
    }
`;

const TableauTile = styled.div`
    width: 22px;
    height: 22px;
    display: flex;
    align-items: center;
    justify-content: center;
    background: #f4f4f4;
`;

const TrayArea = styled.div`
    margin-left: auto;
    display: flex;
    align-items: center;
    padding-right: 24px;
`;

const TrayGap = styled.div`
    width: 10px;
`;

const Clock = styled.div`
    width: 58px;
    margin: 0 18px 0 10px;
    display: flex;
    flex-direction: column;
    align-items: center;
    gap: 1px;
    font-size: 11.5px;
    line-height: 18px;
    color: #eee;
    white-space: nowrap;
`;
